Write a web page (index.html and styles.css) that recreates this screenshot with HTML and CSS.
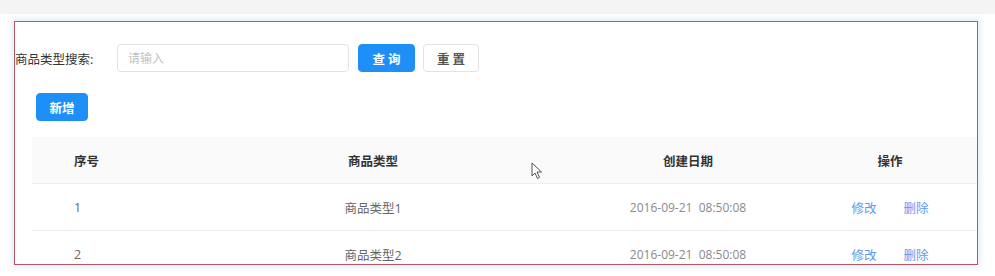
FILE: index.html
```html
<!DOCTYPE html>
<html lang="zh-CN">
<head>
    <meta charset="UTF-8">
    <meta name="viewport" content="width=device-width, initial-scale=1.0">
    <title>商品类型管理</title>
    <link rel="stylesheet" href="styles.css">
</head>
<body>
    <div class="topbar"></div>

    <div class="panel">
        <div class="search-row">
            <label class="search-label">商品类型搜索:</label>
            <input class="search-input" type="text" placeholder="请输入">
            <button class="btn btn-primary">查 询</button>
            <button class="btn btn-default">重 置</button>
        </div>

        <div class="action-row">
            <button class="btn btn-primary btn-add">新增</button>
        </div>

        <div class="table">
            <div class="table-row table-head">
                <div class="cell cell-index">序号</div>
                <div class="cell">商品类型</div>
                <div class="cell">创建日期</div>
                <div class="cell">操作</div>
            </div>
            <div class="table-row">
                <div class="cell cell-index">1</div>
                <div class="cell">商品类型1</div>
                <div class="cell cell-date">2016-09-21&nbsp;&nbsp;08:50:08</div>
                <div class="cell cell-ops"><a href="#">修改</a><a href="#">删除</a></div>
            </div>
            <div class="table-row">
                <div class="cell cell-index">2</div>
                <div class="cell">商品类型2</div>
                <div class="cell cell-date">2016-09-21&nbsp;&nbsp;08:50:08</div>
                <div class="cell cell-ops"><a href="#">修改</a><a href="#">删除</a></div>
            </div>
        </div>
    </div>

    <!-- mouse pointer from the capture -->
    <svg class="cursor" width="12" height="18" viewBox="0 0 12 18">
        <path d="M1 1 L1 14 L4 11 L6.5 16.5 L8.5 15.5 L6 10 L10.5 10 Z" fill="#fff" stroke="#555" stroke-width="1"/>
    </svg>
</body>
</html>
```

FILE: styles.css
```css
* {
    margin: 0;
    padding: 0;
    box-sizing: border-box;
    font-family: "Open Sans", "Noto Sans CJK SC", sans-serif;
}

body {
    background-color: #fff;
    position: relative;
    width: 995px;
    height: 276px;
    overflow: hidden;
}

.topbar {
    height: 14px;
    background-color: #f4f4f4;
}

.panel {
    margin: 7px 0 0 14px;
    width: 964px;
    height: 244px;
    border: 1px solid #bd5660;
    background-color: #fff;
    box-shadow: 0 0 6px 2px rgba(150, 185, 240, 0.3);
    overflow: hidden;
}

.search-row {
    display: flex;
    align-items: center;
    height: 28px;
    margin-top: 22px;
}

.search-label {
    width: 102px;
    font-size: 12.5px;
    color: #333;
}

.search-input {
    width: 232px;
    height: 28px;
    border: 1px solid #e3e3e3;
    border-radius: 4px;
    padding: 0 10px;
    font-size: 12px;
    outline: none;
}

.search-input::placeholder {
    color: #c2c2c2;
}

.btn {
    height: 28px;
    border-radius: 4px;
    font-size: 12.5px;
    cursor: pointer;
}

.btn-primary {
    background-color: #1d8ff7;
    border: 1px solid #1d8ff7;
    color: #fff;
    font-weight: bold;
    width: 57px;
    margin-left: 9px;
}

.btn-default {
    background-color: #fff;
    border: 1px solid #e3e3e3;
    color: #555;
    font-weight: bold;
    width: 56px;
    margin-left: 8px;
}

.action-row {
    margin-top: 21px;
    padding-left: 21px;
}

.btn-add {
    margin-left: 0;
    width: 52px;
    height: 28px;
}

.table {
    margin: 16px 0 0 17px;
    width: 945px;
}

.table-row {
    display: grid;
    grid-template-columns: 150px 382px 248px 156px;
    height: 47px;
    align-items: center;
    border-bottom: 1px solid #efefef;
    font-size: 12.5px;
    color: #666;
}

.table-head {
    background-color: #fafafa;
    color: #333;
    font-weight: bold;
}

.cell {
    text-align: center;
}

.cell-index {
    text-align: left;
    padding-left: 42px;
}

.cell-date {
    color: #8a8a8a;
    font-size: 12px;
}

.cell-ops {
    display: flex;
    justify-content: center;
    gap: 27px;
}

.cell-ops a {
    color: #5a9af2;
    text-decoration: none;
}

.cursor {
    position: absolute;
    left: 531px;
    top: 162px;
}
```
